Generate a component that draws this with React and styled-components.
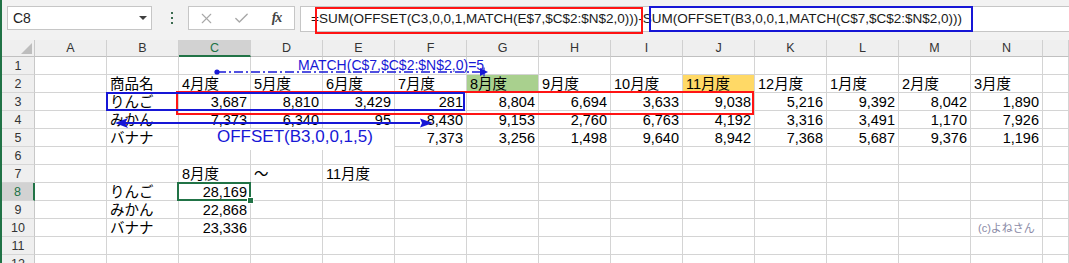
import React from 'react';
import styled, { createGlobalStyle, css } from 'styled-components';
import { X, Check } from 'lucide-react';

const FONT = `"Liberation Sans", "Noto Sans CJK JP", sans-serif`;
const GREEN = '#217346';
const BLUE = '#1717d6';
const RED = '#ff1414';
const GRID = '#d4d4d4';

const Global = createGlobalStyle`
  html, body { margin: 0; padding: 0; background: #fff; }
  body { font-family: ${FONT}; }
`;

const Root = styled.div`
  position: relative;
  width: 1069px;
  height: 263px;
  overflow: hidden;
  background: #fff;
`;

const Window = styled.div`
  display: flex;
  flex-direction: column;
  height: 100%;
  border-left: 2px solid ${GREEN};
`;

/* ---------- formula bar ---------- */
const Toolbar = styled.div`
  height: 40px;
  flex: none;
  box-sizing: border-box;
  display: flex;
  align-items: flex-start;
  padding: 6px 0 0 5px;
  background: #f2f2f2;
`;

const NameBox = styled.div`
  width: 145px;
  height: 24px;
  box-sizing: border-box;
  border: 1px solid #c6c6c6;
  background: #fff;
  display: flex;
  align-items: center;
  justify-content: space-between;
  padding: 0 4px 0 5px;
  font: 14px ${FONT};
  color: #222;
`;

const Caret = styled.span`
  width: 0;
  height: 0;
  border-left: 4px solid transparent;
  border-right: 4px solid transparent;
  border-top: 4px solid #3f3f3f;
`;

const Dots = styled.div`
  width: 36px;
  height: 24px;
  box-sizing: border-box;
  padding-left: 4px;
  display: flex;
  flex-direction: column;
  align-items: center;
  justify-content: center;
  gap: 3px;
`;

const Dot = styled.span`
  width: 2px;
  height: 2px;
  background: #3b6b4f;
`;

const ButtonBox = styled.div`
  width: 107px;
  height: 24px;
  box-sizing: border-box;
  border: 1px solid #c6c6c6;
  background: #fff;
  display: grid;
  grid-template-columns: repeat(3, 1fr);
  align-items: center;
  justify-items: center;
`;

const Fx = styled.span`
  font: italic bold 14px "Liberation Serif", serif;
  color: #444;
  letter-spacing: -1px;
`;

const FormulaInput = styled.div`
  flex: 1;
  margin-left: 5px;
  height: 26px;
  box-sizing: border-box;
  border: 1px solid #c6c6c6;
  border-right: none;
  background: #fff;
  padding-left: 10px;
  font: 13.5px ${FONT};
  line-height: 24px;
  color: #1a1a1a;
  white-space: nowrap;
`;

/* ---------- sheet ---------- */
const Sheet = styled.div`
  display: grid;
  grid-template-columns: 33px repeat(14, 72px) 1fr;
  grid-template-rows: 17px;
  grid-auto-rows: 18px;
`;

const Corner = styled.div`
  position: relative;
  background: #efefef;
  border-right: 1px solid #c8c8c8;
  border-bottom: 1px solid #c0c0c0;
  &::after {
    content: '';
    position: absolute;
    right: 2px;
    bottom: 2px;
    border-left: 11px solid transparent;
    border-bottom: 11px solid #bdbdbd;
  }
`;

const ColHeader = styled.div`
  box-sizing: border-box;
  background: ${(p) => (p.$sel ? '#d2d2d2' : '#efefef')};
  border-right: 1px solid #d0d0d0;
  border-bottom: ${(p) => (p.$sel ? `2px solid ${GREEN}` : '1px solid #c0c0c0')};
  color: ${(p) => (p.$sel ? GREEN : '#333')};
  font: 12.5px ${FONT};
  display: flex;
  align-items: center;
  justify-content: center;
`;

const RowHeader = styled.div`
  box-sizing: border-box;
  background: ${(p) => (p.$sel ? '#d2d2d2' : '#efefef')};
  border-right: ${(p) => (p.$sel ? `2px solid ${GREEN}` : '1px solid #c8c8c8')};
  border-bottom: 1px solid #d6d6d6;
  color: ${(p) => (p.$sel ? GREEN : '#333')};
  font: 12.5px ${FONT};
  display: flex;
  align-items: center;
  justify-content: center;
  padding-top: 1px;
`;

const Cell = styled.div`
  position: relative;
  box-sizing: border-box;
  border-right: 1px solid ${GRID};
  border-bottom: 1px solid ${GRID};
  background: ${(p) => p.$bg || '#fff'};
  font: 14.5px ${FONT};
  line-height: 18px;
  color: #000;
  padding: 0 3px 0 3px;
  white-space: nowrap;
  text-align: ${(p) => (p.$num ? 'right' : 'left')};
  ${(p) =>
    p.$active &&
    css`
      z-index: 2;
      &::before {
        content: '';
        position: absolute;
        left: -2px;
        top: -1px;
        right: -1px;
        bottom: -1px;
        border: 2px solid ${GREEN};
      }
      &::after {
        content: '';
        position: absolute;
        right: -4px;
        bottom: -4px;
        width: 5px;
        height: 5px;
        background: ${GREEN};
        border: 1px solid #fff;
      }
    `}
`;

/* ---------- overlays ---------- */
const Mark = styled.div`
  position: absolute;
  left: ${(p) => p.$x}px;
  top: ${(p) => p.$y}px;
  width: ${(p) => p.$w}px;
  height: ${(p) => p.$h}px;
  box-sizing: border-box;
  border: 2px solid ${(p) => p.$color};
  pointer-events: none;
  z-index: 5;
`;

const MatchLabel = styled.div`
  position: absolute;
  left: 298px;
  top: 57px;
  font: 14px ${FONT};
  line-height: 17px;
  color: ${BLUE};
  white-space: nowrap;
  z-index: 5;
`;

const OffsetBox = styled.div`
  position: absolute;
  left: 179px;
  top: 129px;
  width: 215px;
  height: 21px;
  background: #fff;
  box-sizing: border-box;
  padding-left: 38px;
  font: 17px ${FONT};
  line-height: 15px;
  color: ${BLUE};
  white-space: nowrap;
  z-index: 4;
`;

const Credit = styled.div`
  position: absolute;
  left: 978px;
  top: 222px;
  font: 11px ${FONT};
  line-height: 13px;
  color: #8a8aa6;
  white-space: nowrap;
  z-index: 5;
`;

const Drawing = styled.svg`
  position: absolute;
  left: ${(p) => p.$x}px;
  top: ${(p) => p.$y}px;
  overflow: visible;
  z-index: 6;
`;

/* ---------- data ---------- */
const COLS = ['A', 'B', 'C', 'D', 'E', 'F', 'G', 'H', 'I', 'J', 'K', 'L', 'M', 'N'];
const MONTHS = ['4月度', '5月度', '6月度', '7月度', '8月度', '9月度', '10月度', '11月度', '12月度', '1月度', '2月度', '3月度'];
const BG = { 'G2': '#a9d08e', 'J2': '#ffd966' };

const ROWS = [
  [],
  ['', '商品名', ...MONTHS],
  ['', 'りんご', 3687, 8810, 3429, 281, 8804, 6694, 3633, 9038, 5216, 9392, 8042, 1890],
  ['', 'みかん', 7373, 6340, 95, 8430, 9153, 2760, 6763, 4192, 3316, 3491, 1170, 7926],
  ['', 'バナナ', '', '', '', 7373, 3256, 1498, 9640, 8942, 7368, 5687, 9376, 1196],
  [],
  ['', '', '8月度', '～', '11月度'],
  ['', 'りんご', 28169],
  ['', 'みかん', 22868],
  ['', 'バナナ', 23336],
  [],
  [],
];

const fmt = (v) => (typeof v === 'number' ? v.toLocaleString('en-US') : v);

export default function App() {
  return (
    <Root>
      <Global />
      <Window>
        <Toolbar>
          <NameBox>
            <span>C8</span>
            <Caret />
          </NameBox>
          <Dots>
            <Dot />
            <Dot />
            <Dot />
          </Dots>
          <ButtonBox>
            <X size={17} strokeWidth={1.6} color="#a8a8a8" />
            <Check size={17} strokeWidth={2} color="#a8a8a8" />
            <Fx>fx</Fx>
          </ButtonBox>
          <FormulaInput>
            =SUM(OFFSET(C3,0,0,1,MATCH(E$7,$C$2:$N$2,0)))-SUM(OFFSET(B3,0,0,1,MATCH(C$7,$C$2:$N$2,0)))
          </FormulaInput>
        </Toolbar>
        <Sheet>
          <Corner />
          {COLS.map((c) => (
            <ColHeader key={c} $sel={c === 'C'}>
              {c}
            </ColHeader>
          ))}
          <ColHeader />
          {ROWS.map((row, ri) => {
            const r = ri + 1;
            return (
              <React.Fragment key={r}>
                <RowHeader $sel={r === 8}>{r}</RowHeader>
                {COLS.map((c, ci) => {
                  const v = row[ci];
                  return (
                    <Cell
                      key={c}
                      $num={typeof v === 'number'}
                      $bg={BG[c + r]}
                      $active={c === 'C' && r === 8}
                    >
                      {v === undefined ? '' : fmt(v)}
                    </Cell>
                  );
                })}
                <Cell />
              </React.Fragment>
            );
          })}
        </Sheet>
      </Window>

      {/* annotations drawn over the sheet */}
      <Mark $x={315} $y={7} $w={328} $h={27} $color={RED} />
      <Mark $x={649} $y={6} $w={324} $h={26} $color={BLUE} />
      <MatchLabel>MATCH(C$7,$C$2:$N$2,0)=5</MatchLabel>
      <Drawing $x={210} $y={64} width="285" height="16" viewBox="0 0 285 16">
        <line x1="7" y1="8" x2="272" y2="8" stroke={BLUE} strokeWidth="1.5" strokeDasharray="9 3 2 3" />
        <circle cx="7" cy="8" r="2.6" fill={BLUE} />
        <polygon points="270,4 278,8 270,12" fill={BLUE} />
        <line x1="274" y1="3.5" x2="274" y2="12.5" stroke={BLUE} strokeWidth="1.2" />
      </Drawing>
      <Mark $x={176} $y={91} $w={578} $h={24} $color={RED} />
      <Mark $x={106} $y={92} $w={359} $h={19} $color={BLUE} />
      <Drawing $x={110} $y={116} width="330" height="14" viewBox="0 0 330 14">
        <line x1="14" y1="7" x2="310" y2="7" stroke={BLUE} strokeWidth="2" />
        <polygon points="5,7 18,2 15,7 18,12" fill={BLUE} />
        <polygon points="323,7 310,2.5 312,7 310,11.5" fill={BLUE} />
      </Drawing>
      <OffsetBox>OFFSET(B3,0,0,1,5)</OffsetBox>
      <Credit>(c)よねさん</Credit>
    </Root>
  );
}
